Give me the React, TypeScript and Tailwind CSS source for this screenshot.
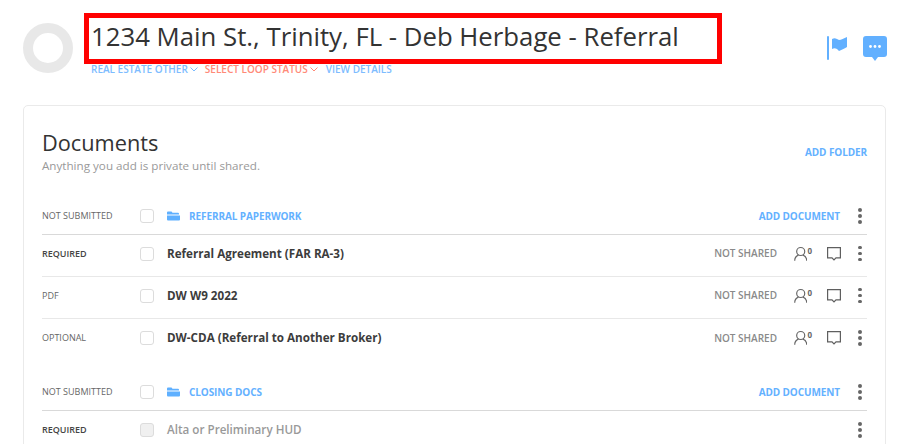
import React from "react";

const font = { fontFamily: '"Open Sans", sans-serif' };

const Chevron = () => (
  <svg width="8" height="5" viewBox="0 0 8 5" className="ml-[2px]" fill="none" stroke="currentColor" strokeWidth="1">
    <path d="M0.5 0.5 4 4 7.5 0.5" />
  </svg>
);

const Checkbox = ({ disabled }: { disabled?: boolean }) => (
  <span className={`block h-[14px] w-[14px] shrink-0 rounded-[3px] border border-[#dcdcdc] ${disabled ? "bg-[#f0f0f0]" : "bg-white"}`} />
);

const Dots = () => (
  <span className="flex w-[14px] shrink-0 flex-col items-center gap-[2.5px]">
    <span className="h-[3.5px] w-[3.5px] rounded-full bg-[#666]" />
    <span className="h-[3.5px] w-[3.5px] rounded-full bg-[#666]" />
    <span className="h-[3.5px] w-[3.5px] rounded-full bg-[#666]" />
  </span>
);

const FolderIcon = () => (
  <svg width="13" height="10" viewBox="0 0 13 10" className="shrink-0" fill="#5fb0ff">
    <path d="M1 0.5h3.5l1 1.2H11a1 1 0 0 1 1 1V3.4H0V1.5a1 1 0 0 1 1-1Z" />
    <path d="M0 4.4h13v4.1a1 1 0 0 1-1 1H1a1 1 0 0 1-1-1Z" />
  </svg>
);

const PersonIcon = () => (
  <span className="flex w-[18px] shrink-0 items-start">
    <svg width="15" height="16" viewBox="0 0 15 16" fill="none" stroke="#666" strokeWidth="1.3">
      <circle cx="7.5" cy="5.2" r="4.5" />
      <path d="M0.8 15.5c0-3.2 1.8-5.3 4.2-6.2M14.2 15.5c0-3.2-1.8-5.3-4.2-6.2" />
    </svg>
    <span className="text-[8px] leading-[9px] font-bold text-[#666]">0</span>
  </span>
);

const CommentIcon = () => (
  <svg width="14" height="14" viewBox="0 0 14 14" className="shrink-0" fill="none" stroke="#5f5f5f" strokeWidth="1.2">
    <path d="M0.6 0.6h12.8v10.3H9L7 13 5 10.9H0.6Z" />
  </svg>
);

const GroupRow = ({ name }: { name: string }) => (
  <div className="flex h-[37px] items-center border-b border-[#d9d9d9]">
    <span className="w-[98px] shrink-0 text-[9px] text-[#666]">NOT SUBMITTED</span>
    <Checkbox />
    <span className="ml-[13px]"><FolderIcon /></span>
    <span className="ml-[9px] text-[10px] font-bold tracking-[-0.1px] text-[#64b1ff]">{name}</span>
    <span className="ml-auto text-[10px] font-bold tracking-[-0.1px] text-[#64b1ff]">ADD DOCUMENT</span>
    <span className="ml-[13px]"><Dots /></span>
  </div>
);

const DocRow = ({
  status,
  name,
  strong,
  disabled,
  last,
}: {
  status: string;
  name: string;
  strong?: boolean;
  disabled?: boolean;
  last?: boolean;
}) => (
  <div className={`flex h-[42px] items-center pb-[4px] ${last ? "" : "border-b border-[#e8e8e8]"}`}>
    <span className={`w-[98px] shrink-0 text-[9px] ${strong ? "font-semibold text-[#444]" : "text-[#666]"}`}>{status}</span>
    <Checkbox disabled={disabled} />
    <span className={`ml-[13px] text-[11.65px] ${disabled ? "font-semibold text-[#999]" : "font-bold text-[#3c3c3c]"}`}>{name}</span>
    {!disabled && (
      <>
        <span className="ml-auto text-[10px] font-semibold text-[#8a8a8a]">NOT SHARED</span>
        <span className="ml-[17px]"><PersonIcon /></span>
        <span className="ml-[15px]"><CommentIcon /></span>
        <span className="ml-[12px]"><Dots /></span>
      </>
    )}
    {disabled && <span className="ml-auto"><Dots /></span>}
  </div>
);

export default function App() {
  return (
    <div style={font} className="h-[444px] w-[906px] overflow-hidden bg-white">
      <div className="flex pt-[13px] pl-[23px]">
        <div className="mt-[10px] h-[50px] w-[50px] shrink-0 rounded-full border-[10px] border-[#e8e8e8]" />
        <div className="ml-[11px]">
          <div className="flex h-[51px] w-[638px] items-center border-[5px] border-[#ff0000] pl-[2px]">
            <h1 className="-mt-[4px] text-[25.75px] leading-none font-medium text-[#333]">1234 Main St., Trinity, FL - Deb Herbage - Referral</h1>
          </div>
          <div className="mt-[-2px] ml-[7px] flex items-center text-[10px] font-semibold">
            <span className="flex items-center text-[#7dbcff]">REAL ESTATE OTHER<Chevron /></span>
            <span className="ml-[7px] flex items-center text-[#ff8a78]">SELECT LOOP STATUS<Chevron /></span>
            <span className="ml-[8px] text-[#7dbcff]">VIEW DETAILS</span>
          </div>
        </div>
        <div className="mt-[23px] ml-[105px] flex items-start">
          <svg width="21" height="24" viewBox="0 0 21 24" fill="#62b0ff">
            <rect x="0" y="0" width="2" height="24" rx="1" />
            <path d="M5 3c2-1 3-1 5 0l2 1c2 0 5-2 8-3v10c-2 1-5 3-8 4l-2-2c-2-1-3-1-5 0Z" />
          </svg>
          <svg width="24" height="25" viewBox="0 0 24 25" className="ml-[15px]" fill="#62b0ff">
            <path d="M3 0h18a3 3 0 0 1 3 3v15a3 3 0 0 1-3 3h-6l-3 4-3-4H3a3 3 0 0 1-3-3V3a3 3 0 0 1 3-3Z" />
            <circle cx="7.5" cy="10.5" r="1.4" fill="#fff" />
            <circle cx="12" cy="10.5" r="1.4" fill="#fff" />
            <circle cx="16.5" cy="10.5" r="1.4" fill="#fff" />
          </svg>
        </div>
      </div>

      <div className="mt-[28px] ml-[23px] w-[863px] rounded-t-[5px] border border-[#eaeaea] px-[18px] pt-[22px]">
        <div className="flex items-start justify-between">
          <div>
            <h2 className="text-[21.75px] leading-[30px] text-[#333]">Documents</h2>
            <p className="text-[11.65px] leading-[16px] text-[#999]">Anything you add is private until shared.</p>
          </div>
          <span className="mt-[17px] text-[10px] font-bold tracking-[-0.1px] text-[#64b1ff]">ADD FOLDER</span>
        </div>
        <div className="mt-[24px]">
          <GroupRow name="REFERRAL PAPERWORK" />
          <DocRow status="REQUIRED" name="Referral Agreement (FAR RA-3)" strong />
          <DocRow status="PDF" name="DW W9 2022" />
          <DocRow status="OPTIONAL" name="DW-CDA (Referral to Another Broker)" last />
        </div>
        <div className="mt-[13px]">
          <GroupRow name="CLOSING DOCS" />
          <DocRow status="REQUIRED" name="Alta or Preliminary HUD" strong disabled last />
        </div>
      </div>
    </div>
  );
}
